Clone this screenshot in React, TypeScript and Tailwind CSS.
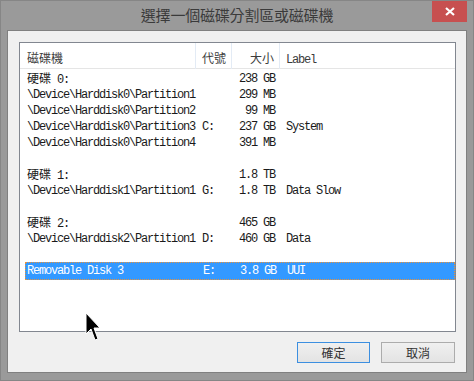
import React from 'react';

type Row = { name: string; letter?: string; size?: string; label?: string; cjk?: boolean };

const rows: (Row | null)[] = [
  { name: ' 0:', size: '238 GB', cjk: true },
  { name: '\\Device\\Harddisk0\\Partition1', size: '299 MB' },
  { name: '\\Device\\Harddisk0\\Partition2', size: '99 MB' },
  { name: '\\Device\\Harddisk0\\Partition3', letter: 'C:', size: '237 GB', label: 'System' },
  { name: '\\Device\\Harddisk0\\Partition4', size: '391 MB' },
  null,
  { name: ' 1:', size: '1.8 TB', cjk: true },
  { name: '\\Device\\Harddisk1\\Partition1', letter: 'G:', size: '1.8 TB', label: 'Data Slow' },
  null,
  { name: ' 2:', size: '465 GB', cjk: true },
  { name: '\\Device\\Harddisk2\\Partition1', letter: 'D:', size: '460 GB', label: 'Data' },
];

const mono = "font-['Liberation_Mono','Noto_Sans_CJK_TC',monospace] text-[12px] tracking-[-1.2px]";
const cjk = "font-['Noto_Sans_CJK_TC',sans-serif] text-[12px] tracking-normal";

function DiskRow({ row, selected }: { row: Row; selected?: boolean }) {
  return (
    <div
      className={`grid grid-cols-[171px_36px_48px_1fr] items-center leading-none whitespace-pre ${mono} ${
        selected
          ? 'h-[18px] bg-[#3399ff] text-white border border-dotted border-[#e8923a]'
          : 'h-4 text-[#1a1a1a]'
      }`}
    >
      <div className={selected ? 'pl-[1px]' : 'pl-[2px]'}>
        {row.cjk && <span className={cjk}>硬碟</span>}
        {row.name}
      </div>
      <div className="pl-[6px]">{row.letter}</div>
      <div className="text-right pr-[5px]">{row.size}</div>
      <div className="pl-[6px]">{row.label}</div>
    </div>
  );
}

export default function App() {
  return (
    <div className="relative w-[474px] h-[381px] bg-[#9a9a9a] border border-[#868686] flex flex-col">
      {/* Title bar */}
      <div className="relative h-[30px] flex items-center justify-center">
        <span className="font-['Noto_Sans_CJK_TC',sans-serif] text-[15px] text-[#3a3a3a] tracking-[-0.2px]">
          選擇一個磁碟分割區或磁碟機
        </span>
        <div className="absolute right-[6px] top-0 w-[35px] h-[21px] bg-[#c75050] flex items-center justify-center">
          <svg width="10" height="9" viewBox="0 0 10 9">
            <path d="M1 1 L9 8 M9 1 L1 8" stroke="white" strokeWidth="2.2" />
          </svg>
        </div>
      </div>

      {/* Client area */}
      <div className="mx-[6px] mb-[7px] flex-1 border border-[#808080] bg-[#f0f0f0] pt-[11px] pl-[11px] pr-[10px] pb-[9px] flex flex-col">
        <div className="h-[290px] border border-[#828790] bg-white flex flex-col">
          {/* Header */}
          <div className="grid grid-cols-[176px_36px_48px_1fr] h-[26px] border-b border-[#e5e5e5] text-[#3c3c3c]">
            <div className={`pl-[7px] pt-[6px] border-r border-[#e3ebf5] ${cjk}`}>磁碟機</div>
            <div className={`pl-[6px] pt-[6px] border-r border-[#e3ebf5] ${cjk}`}>代號</div>
            <div className={`text-right pr-[5px] pt-[6px] border-r border-[#e3ebf5] ${cjk}`}>大小</div>
            <div className={`pl-[6px] pt-[8px] ${mono}`}>Label</div>
          </div>

          {/* Rows */}
          <div className="pl-[5px] pt-[2px] flex flex-col">
            {rows.map((r, i) => (r ? <DiskRow key={i} row={r} /> : <div key={i} className="h-4" />))}
            <div className="h-[15px]" />
            <DiskRow row={{ name: 'Removable Disk 3', letter: 'E:', size: '3.8 GB', label: 'UUI' }} selected />
          </div>
        </div>

        {/* Buttons */}
        <div className="mt-[10px] flex justify-end gap-[11px] pr-[1px]">
          <button className="w-[73px] h-[21px] border border-[#3c8fe0] bg-gradient-to-b from-[#f0f0f0] to-[#e3e3e3] text-[12px] text-[#333] font-['Noto_Sans_CJK_TC',sans-serif] leading-none">
            確定
          </button>
          <button className="w-[74px] h-[21px] border border-[#acacac] bg-gradient-to-b from-[#f0f0f0] to-[#e3e3e3] text-[12px] text-[#333] font-['Noto_Sans_CJK_TC',sans-serif] leading-none">
            取消
          </button>
        </div>
      </div>

      {/* Mouse cursor */}
      <svg className="absolute left-[84px] top-[311px]" width="17" height="30" viewBox="0 0 17 30">
        <path
          d="M1 1 L1 22 L6 17 L10 28 L13 27 L9 16 L15 16 Z"
          fill="black"
          stroke="white"
          strokeWidth="1"
        />
      </svg>
    </div>
  );
}
